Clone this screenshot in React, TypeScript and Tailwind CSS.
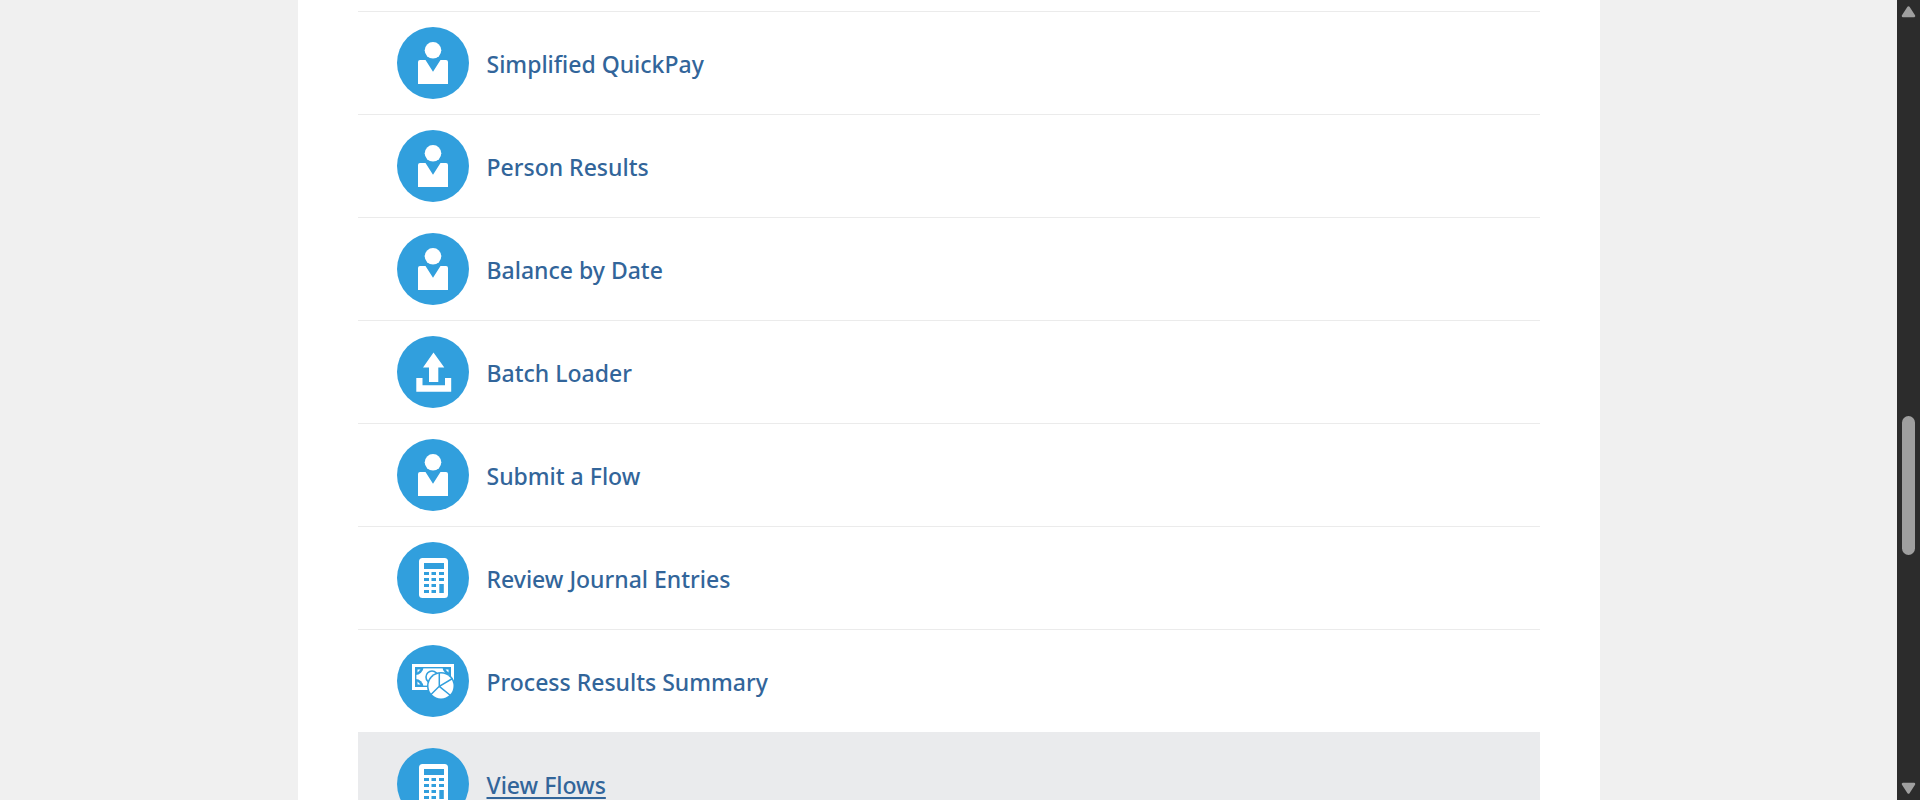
import React from "react";

type IconName = "person" | "upload" | "calculator" | "money";

type Item = { label: string; icon: IconName; active?: boolean };

const items: Item[] = [
  { label: "Simplified QuickPay", icon: "person" },
  { label: "Person Results", icon: "person" },
  { label: "Balance by Date", icon: "person" },
  { label: "Batch Loader", icon: "upload" },
  { label: "Submit a Flow", icon: "person" },
  { label: "Review Journal Entries", icon: "calculator" },
  { label: "Process Results Summary", icon: "money" },
  { label: "View Flows", icon: "calculator", active: true },
];

const BLUE = "#319fdd";

function PersonGlyph() {
  return (
    <>
      <circle cx="36" cy="23.3" r="8.3" fill="#fff" />
      <path d="M23 33h5.5L36 44.8 43.5 33H49q2 0 2 2v22H21V35q0-2 2-2z" fill="#fff" />
    </>
  );
}

function UploadGlyph() {
  return (
    <>
      <path d="M36.5 16.5L47.3 31.5H41.3V46H32V31.5H26z" fill="#fff" />
      <path d="M19.3 42H25.5V49.3H48V42H54.2V55.7H19.3z" fill="#fff" />
    </>
  );
}

function CalculatorGlyph() {
  return (
    <>
      <rect x="22" y="16" width="29" height="40" rx="3.5" fill="#fff" />
      <rect x="27" y="21" width="20" height="6" fill={BLUE} />
      {[30, 36, 42, 48].map((y, row) => (
        <g key={y} fill={BLUE}>
          <rect x="27" y={y} width="5" height="3" />
          <rect x="34.5" y={y} width="4.5" height="3" />
          {row < 2 && <rect x="42" y={y} width="5" height="3" />}
        </g>
      ))}
      <rect x="42.3" y="42" width="4.5" height="9" fill={BLUE} />
    </>
  );
}

function MoneyGlyph() {
  return (
    <>
      <rect x="15" y="19" width="42" height="26" fill="#fff" />
      <rect x="18.7" y="22.7" width="34.6" height="18.6" fill="#fff" stroke={BLUE} strokeWidth="1.4" />
      <g fill={BLUE}>
        <path d="M18 22h8.5a8 8 0 0 1-8.5 8z" />
        <path d="M54 22h-8.5a8 8 0 0 0 8.5 8z" />
        <path d="M18 42h8.5a8 8 0 0 0-8.5-8z" />
      </g>
      <path d="M20.5 24.5h3l-3 3zM51.5 24.5h-3l3 3zM20.5 39.5h3l-3-3z" fill="#fff" />
      <circle cx="35" cy="32" r="6" fill="#fff" stroke={BLUE} strokeWidth="1.6" />
      <circle cx="44" cy="41" r="14" fill={BLUE} />
      <circle cx="44" cy="41" r="12.5" fill="#fff" />
      <path d="M42.3 28V41.3L33.5 50M42.3 41.3L55.5 33.5M42.3 41.3L53.5 50.5" fill="none" stroke={BLUE} strokeWidth="1.5" />
    </>
  );
}

function RowIcon({ name }: { name: IconName }) {
  return (
    <svg viewBox="0 0 72 72" className="size-[72px] shrink-0" aria-hidden="true">
      <circle cx="36" cy="36" r="36" fill={BLUE} />
      {name === "person" && <PersonGlyph />}
      {name === "upload" && <UploadGlyph />}
      {name === "calculator" && <CalculatorGlyph />}
      {name === "money" && <MoneyGlyph />}
    </svg>
  );
}

function Row({ item }: { item: Item }) {
  return (
    <li
      className={
        item.active
          ? "flex items-center gap-[18px] border-t border-[#eaebed] bg-[#eaebed] py-[15px] pl-[39px]"
          : "flex items-center gap-[18px] border-t border-[#ebebeb] py-[15px] pl-[39px]"
      }
    >
      <RowIcon name={item.icon} />
      <a
        href="#"
        className={
          item.active
            ? "pt-0.5 text-[23px] leading-8 font-medium text-[#32659a] underline decoration-2 underline-offset-3"
            : "pt-0.5 text-[23px] leading-8 font-medium text-[#32659a]"
        }
      >
        {item.label}
      </a>
    </li>
  );
}

function Scrollbar() {
  return (
    <div className="flex w-[23px] shrink-0 flex-col items-center bg-[#2c2c2c] py-[5px]" aria-hidden="true">
      <svg viewBox="0 0 15 13" className="h-[13px] w-[15px]">
        <path d="M7.5 2.5L13 11H2z" fill="#9f9f9f" stroke="#9f9f9f" strokeWidth="2.5" strokeLinejoin="round" />
      </svg>
      <div className="grow-398" />
      <div className="h-[139px] w-[13px] rounded-full bg-[#9f9f9f]" />
      <div className="grow-227" />
      <svg viewBox="0 0 15 13" className="h-[13px] w-[15px]">
        <path d="M7.5 10.5L2 2H13z" fill="#9f9f9f" stroke="#9f9f9f" strokeWidth="2.5" strokeLinejoin="round" />
      </svg>
    </div>
  );
}

export default function App() {
  return (
    <div className="flex h-screen overflow-hidden bg-[#f0f0f0] font-['Noto_Sans','Open_Sans',sans-serif]">
      <main className="min-w-0 grow overflow-hidden">
        <div className="mx-auto max-w-[1302px] bg-white px-[60px] pt-[11px]">
          <ul>
            {items.map((item) => (
              <Row key={item.label} item={item} />
            ))}
          </ul>
        </div>
      </main>
      <Scrollbar />
    </div>
  );
}
